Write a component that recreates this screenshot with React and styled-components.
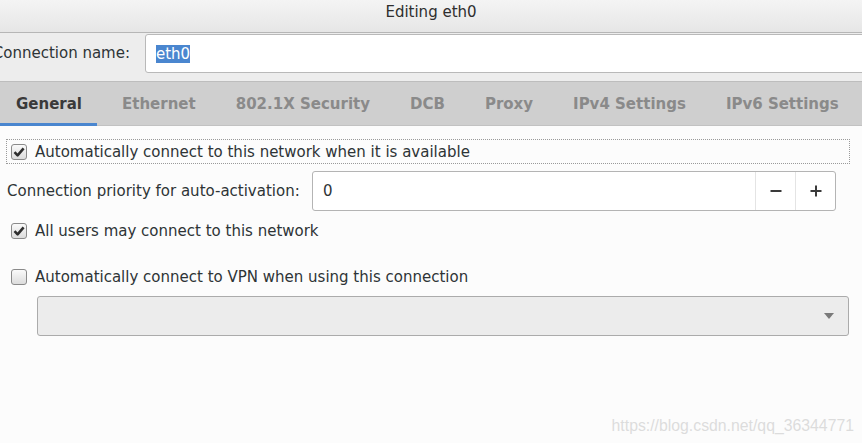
import styled, { createGlobalStyle } from "styled-components";

const Global = createGlobalStyle`
  html, body { margin: 0; padding: 0; }
  body {
    font-family: "DejaVu Sans", "Noto Sans", sans-serif;
    font-size: 15px;
    color: #2e3436;
    background: #fcfcfc;
    overflow: hidden;
  }
`;

const Window = styled.div`
  position: relative;
  width: 862px;
  height: 443px;
  overflow: hidden;
  background: #fcfcfc;
`;

const TitleBar = styled.div`
  height: 33px;
  display: flex;
  align-items: center;
  justify-content: center;
  padding-bottom: 8px;
  box-sizing: border-box;
  background: linear-gradient(#f4f4f4, #e6e6e6);
  border-bottom: 1px solid #b6b6b6;
  color: #2e2e2e;
`;

const NameRow = styled.div`
  height: 48px;
  display: flex;
  align-items: flex-start;
  padding-top: 1px;
  box-sizing: border-box;
  background: #ededed;
`;

const NameLabel = styled.div`
  width: 130px;
  flex-shrink: 0;
  display: flex;
  justify-content: flex-end;
  white-space: nowrap;
  line-height: 38px;
  color: #2e3436;
`;

const NameInput = styled.div`
  margin-left: 15px;
  flex: 1;
  margin-right: -20px;
  height: 39px;
  display: flex;
  align-items: center;
  padding-left: 10px;
  background: #ffffff;
  border: 1px solid #b9b9b9;
  border-radius: 3px;
  box-sizing: border-box;
`;

const Selected = styled.span`
  background: #4a86cf;
  color: #ffffff;
  line-height: 18px;
`;

const TabBar = styled.div`
  height: 45px;
  display: flex;
  margin-left: -4px;
  background: #cfcfcf;
  border-top: 1px solid #bdbdbd;
  border-bottom: 1px solid #c2c2c2;
  box-sizing: border-box;
`;

const Tab = styled.div`
  position: relative;
  padding: 0 20px;
  display: flex;
  align-items: center;
  font-weight: bold;
  color: ${(p) => (p.$active ? "#3a3a3a" : "#8a8a8a")};
  ${(p) =>
    p.$active &&
    `
    &::after {
      content: "";
      position: absolute;
      left: 4px;
      right: 5px;
      bottom: -1px;
      height: 3px;
      background: #4a86cf;
    }
  `}
`;

const Content = styled.div`
  padding: 13px 12px 0 6px;
  display: flex;
  flex-direction: column;
`;

const CheckRow = styled.div`
  display: flex;
  align-items: center;
  gap: 8px;
  height: 25px;
  padding-left: 4px;
  box-sizing: border-box;
  border: 1px dotted ${(p) => (p.$focus ? "#9a9a9a" : "transparent")};
  margin-top: ${(p) => p.$mt || 0}px;
`;

const Box = styled.span`
  width: 14px;
  height: 14px;
  border: 1px solid #8a8a8a;
  border-radius: 3px;
  background: linear-gradient(#fafafa, #dcdcdc);
  display: flex;
  align-items: center;
  justify-content: center;
  flex-shrink: 0;
`;

const PriorityRow = styled.div`
  display: flex;
  align-items: center;
  margin-top: 7px;
  padding-left: 1px;
`;

const PriorityLabel = styled.div`
  width: 305px;
  flex-shrink: 0;
`;

const Spin = styled.div`
  width: 524px;
  height: 40px;
  display: flex;
  border: 1px solid #b4b4b4;
  border-radius: 3px;
  background: #ffffff;
  box-sizing: border-box;
`;

const SpinValue = styled.div`
  flex: 1;
  display: flex;
  align-items: center;
  padding-left: 10px;
`;

const SpinButton = styled.div`
  width: 39px;
  display: flex;
  align-items: center;
  justify-content: center;
  border-left: 1px solid #e4e4e4;
`;

const Combo = styled.div`
  margin-left: 31px;
  margin-right: 1px;
  height: 40px;
  margin-top: 7px;
  border: 1px solid #ababab;
  border-radius: 3px;
  background: #ececec;
  display: flex;
  align-items: center;
  justify-content: flex-end;
  padding-right: 14px;
  box-sizing: border-box;
`;

const Watermark = styled.div`
  position: absolute;
  right: 8px;
  bottom: 8px;
  font-family: "Liberation Sans", Arial, sans-serif;
  font-size: 15.8px;
  color: #dcdcdc;
`;

const Check = () => (
  <svg width="12" height="12" viewBox="0 0 12 12">
    <path d="M1.5 6.2 L4.6 9.3 L10.6 2.4" fill="none" stroke="#2e2e2e" strokeWidth="2.6" strokeLinejoin="round" />
  </svg>
);

const tabs = ["General", "Ethernet", "802.1X Security", "DCB", "Proxy", "IPv4 Settings", "IPv6 Settings"];

export default function App() {
  return (
    <Window>
      <Global />
      <TitleBar>Editing eth0</TitleBar>
      <NameRow>
        <NameLabel>Connection name:</NameLabel>
        <NameInput>
          <Selected>eth0</Selected>
        </NameInput>
      </NameRow>
      <TabBar>
        {tabs.map((t, i) => (
          <Tab key={t} $active={i === 0}>
            {t}
          </Tab>
        ))}
      </TabBar>
      <Content>
        <CheckRow $focus>
          <Box>
            <Check />
          </Box>
          Automatically connect to this network when it is available
        </CheckRow>
        <PriorityRow>
          <PriorityLabel>Connection priority for auto-activation:</PriorityLabel>
          <Spin>
            <SpinValue>0</SpinValue>
            <SpinButton>
              <svg width="12" height="12" viewBox="0 0 12 12">
                <path d="M0.5 6 H11.5" stroke="#3a3a3a" strokeWidth="2" />
              </svg>
            </SpinButton>
            <SpinButton>
              <svg width="12" height="12" viewBox="0 0 12 12">
                <path d="M0.5 6 H11.5 M6 0.5 V11.5" stroke="#3a3a3a" strokeWidth="2" />
              </svg>
            </SpinButton>
          </Spin>
        </PriorityRow>
        <CheckRow $mt={7}>
          <Box>
            <Check />
          </Box>
          All users may connect to this network
        </CheckRow>
        <CheckRow $mt={21}>
          <Box />
          Automatically connect to VPN when using this connection
        </CheckRow>
        <Combo>
          <svg width="10" height="6" viewBox="0 0 10 6">
            <path d="M0 0 H10 L5 6 Z" fill="#7a7a7a" />
          </svg>
        </Combo>
      </Content>
      <Watermark>https://blog.csdn.net/qq_36344771</Watermark>
    </Window>
  );
}
